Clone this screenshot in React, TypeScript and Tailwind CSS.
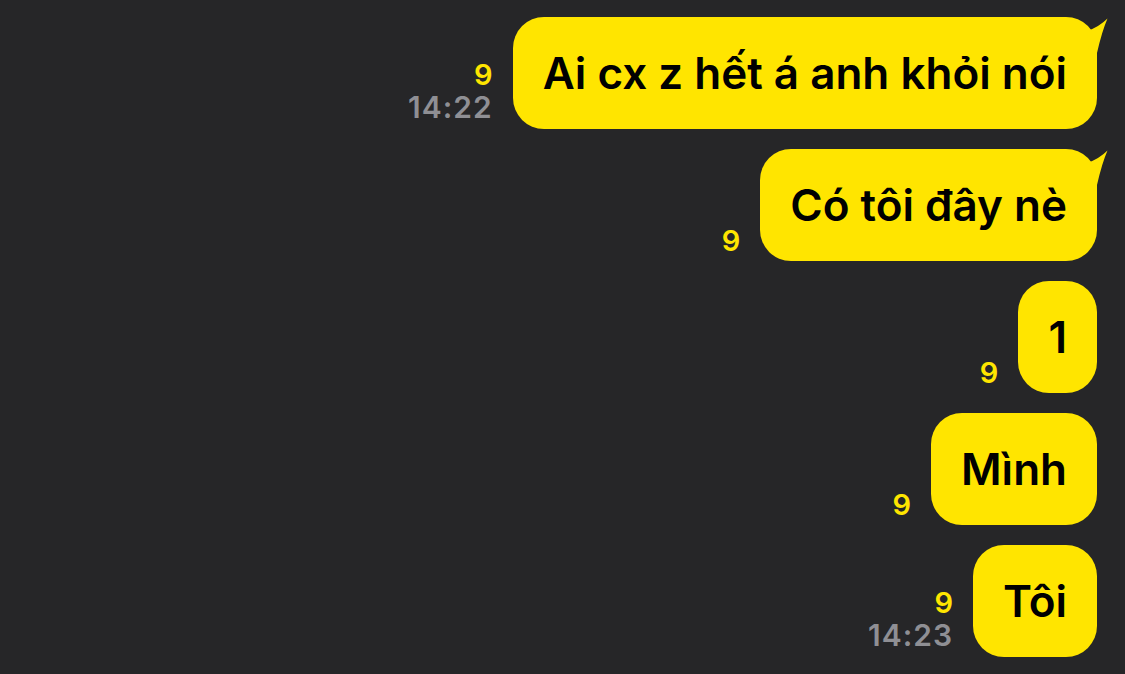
import React from "react";

type Msg = { text: string; time?: string; tail?: boolean };

const msgs: Msg[] = [
  { text: "Ai cx z hết á anh khỏi nói", time: "14:22", tail: true },
  { text: "Có tôi đây nè", tail: true },
  { text: "1" },
  { text: "Mình" },
  { text: "Tôi", time: "14:23" },
];

function Tail() {
  return (
    <svg
      className="absolute top-0 right-[-12px]"
      width="24"
      height="40"
      viewBox="0 0 24 40"
    >
      <path d="M2 14 Q14 10 22.5 1.5 Q17 14 12 36 L4 36 Z" fill="#FFE500" />
    </svg>
  );
}

export default function App() {
  return (
    <div
      className="w-[1125px] h-[674px] bg-[#262628] overflow-hidden flex flex-col items-end gap-[20px] pt-[17px] pr-[28px]"
      style={{ fontFamily: "Inter, 'Noto Sans', sans-serif" }}
    >
      {msgs.map((m, i) => (
        <div key={i} className="flex items-end gap-[20px]">
          <div className="flex flex-col items-end pb-[5px]">
            <span className="text-[#FFE500] text-[29px] font-semibold leading-[30px]">9</span>
            {m.time && (
              <span className="text-[#8f8f94] text-[30px] font-semibold leading-[34px] tracking-[1px]">{m.time}</span>
            )}
          </div>
          <div className="relative bg-[#FFE500] rounded-[31px] h-[112px] px-[30px] flex items-center">
            {m.tail && <Tail />}
            <span className="relative text-black text-[44px] font-semibold leading-none tracking-[0px]">
              {m.text}
            </span>
          </div>
        </div>
      ))}
    </div>
  );
}
